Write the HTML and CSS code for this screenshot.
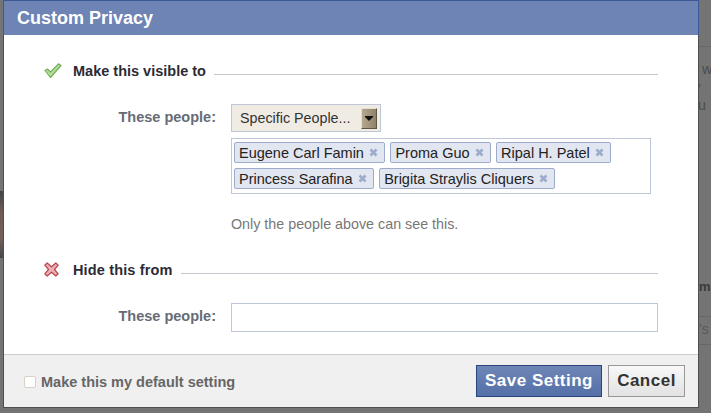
FILE: index.html
```html
<!DOCTYPE html>
<html lang="en">
<head>
<meta charset="utf-8">
<title>Custom Privacy</title>
<link rel="stylesheet" href="styles.css">
</head>
<body>
<div class="backdrop">
  <div class="bg-photo"></div>
  <div class="bg-text bg-w">w</div>
  <div class="bg-text bg-u">' u</div>
  <div class="bg-text bg-mi">mi</div>
  <div class="bg-text bg-s">'s</div>
  <div class="bg-line bg-l1"></div>
  <div class="bg-line bg-l2"></div>
  <div class="bg-line bg-l3"></div>
  <div class="dialog">
    <div class="title">Custom Privacy</div>
    <div class="body">
      <section class="section section-show">
        <div class="heading">
          <svg class="mark" width="18" height="16" viewBox="0 0 18 16"><path d="M1 7.500L3.500 6 6.500 9 14.500 .8 17 2.500 6.500 14.500z" fill="#b6dc9e" stroke="#74b05a" stroke-width="1.200" stroke-linejoin="round"/></svg>
          <h2>Make this visible to</h2>
          <span class="rule"></span>
        </div>
        <div class="row row-select">
          <label class="label">These people:</label>
          <div class="field">
            <div class="select">
              <span>Specific People...</span>
              <span class="arrow"></span>
            </div>
            <div class="tokens">
              <span class="token">Eugene Carl Famin<svg class="x" width="9" height="9" viewBox="0 0 9 9"><path d="M1.500 1.500l6 6M7.500 1.500l-6 6"/></svg></span>
              <span class="token">Proma Guo<svg class="x" width="9" height="9" viewBox="0 0 9 9"><path d="M1.500 1.500l6 6M7.500 1.500l-6 6"/></svg></span>
              <span class="token">Ripal H. Patel<svg class="x" width="9" height="9" viewBox="0 0 9 9"><path d="M1.500 1.500l6 6M7.500 1.500l-6 6"/></svg></span>
              <span class="token">Princess Sarafina<svg class="x" width="9" height="9" viewBox="0 0 9 9"><path d="M1.500 1.500l6 6M7.500 1.500l-6 6"/></svg></span>
              <span class="token">Brigita Straylis Cliquers<svg class="x" width="9" height="9" viewBox="0 0 9 9"><path d="M1.500 1.500l6 6M7.500 1.500l-6 6"/></svg></span>
            </div>
            <p class="help">Only the people above can see this.</p>
          </div>
        </div>
      </section>
      <section class="section section-hide">
        <div class="heading">
          <svg class="mark" width="18" height="16" viewBox="0 0 18 16"><path d="M.8 3.200L3.200 1 7.500 4.800 11.800 1l2.400 2.200L10.500 7.500l3.700 4.300-2.400 2.200L7.500 10.200 3.200 14 .8 11.800 4.500 7.500z" fill="#eab0b4" stroke="#bc4650" stroke-width="1.200" stroke-linejoin="round"/></svg>
          <h2>Hide this from</h2>
          <span class="rule"></span>
        </div>
        <div class="row row-input">
          <label class="label">These people:</label>
          <div class="input"></div>
        </div>
      </section>
    </div>
    <div class="footer">
      <label class="default"><span class="check"></span>Make this my default setting</label>
      <div class="buttons">
        <button class="btn btn-save">Save Setting</button>
        <button class="btn btn-cancel">Cancel</button>
      </div>
    </div>
  </div>
</div>
</body>
</html>
```
FILE: styles.css
```css
* { box-sizing: border-box; }
html, body { margin: 0; height: 100%; overflow: hidden; }
body { font-family: "Liberation Sans", Arial, sans-serif; }
.backdrop { position: relative; width: 711px; height: 413px; background: #747474; padding-left: 3px; overflow: hidden; }
.bg-photo { position: absolute; left: 0; top: 191px; width: 3px; height: 67px; background: linear-gradient(#3f4548, #6f5a55 30%, #75605a 70%, #45484c); }
.bg-text { position: absolute; font-size: 14.300px; color: #4c4c4c; line-height: 16px; }
.bg-w { left: 702px; top: 61px; }
.bg-u { left: 698px; top: 81px; }
.bg-mi { left: 699px; top: 279px; width: 12px; font-weight: bold; color: #3a3a3a; white-space: nowrap; font-size: 13px; }
.bg-s { left: 699px; top: 321px; color: #5a5a5a; }
.bg-line { position: absolute; left: 699px; width: 12px; height: 1px; background: #666; }
.bg-l1 { top: 46px; }
.bg-l2 { top: 316px; }
.bg-l3 { top: 344px; }
.dialog { position: relative; width: 696px; height: 408px; display: flex; flex-direction: column; background: #fff; border: 1px solid #4f4f4f; border-top: 0; }
.title { height: 35px; margin: 0 -1px; padding-left: 13px; background: #6d84b4; border: 1px solid #3b5998; border-bottom: 0; color: #fff; font-size: 18px; font-weight: bold; line-height: 34px; }
.body { flex: 1; padding: 26px 40px 0 40px; }
.heading { display: flex; align-items: center; height: 20px; }
.mark { flex: none; margin-right: 11px; }
.heading h2 { margin: 0; font-size: 14.500px; font-weight: bold; color: #2b2b35; line-height: 20px; white-space: nowrap; }
.section-hide .heading h2 { letter-spacing: 0.150px; }
.rule { flex: 1; height: 1px; margin: 6px 0 0 8px; background: #c4c8cf; }
.row { display: flex; }
.label { width: 187px; padding-right: 15px; text-align: right; font-size: 14.500px; font-weight: bold; color: #666b75; white-space: nowrap; }
.row-select { margin-top: 23px; }
.row-select .label { padding-top: 5px; }
.field { flex: 1; }
.select { display: flex; align-items: center; justify-content: space-between; width: 150px; height: 28px; padding: 0 3px 0 8px; background: #f0ece4; border: 1px solid #bdc7d8; font-size: 14.300px; color: #333; }
.arrow { width: 16px; height: 21px; background: linear-gradient(90deg, #b5a88f, #8f8268); border: 1px solid; border-color: #e4dfd4 #5e5545 #5e5545 #e4dfd4; position: relative; }
.arrow::before { content: ""; position: absolute; left: 3px; top: 7px; width: 8px; height: 1px; background: #111; }
.arrow::after { content: ""; position: absolute; left: 3px; top: 8px; border: 4px solid transparent; border-top: 4px solid #111; }
.tokens { display: flex; flex-wrap: wrap; align-content: flex-start; gap: 5px 5.500px; width: 420px; height: 56px; margin-top: 6px; padding: 3px 2px; background: #fff; border: 1px solid #bdc7d8; }
.token { display: flex; align-items: center; height: 21px; padding: 0 6px 0 4px; background: #e2e6f0; border: 1px solid #9daccc; border-radius: 2px; font-size: 14.500px; color: #222; white-space: nowrap; }
.x { margin-left: 5px; fill: none; stroke: #9daccc; stroke-width: 2.600; }
.help { margin: 22px 0 0; font-size: 14.300px; color: #777; line-height: 16px; }
.section-hide { margin-top: 28px; }
.row-input { margin-top: 23px; }
.row-input .label { padding-top: 5px; }
.input { width: 427px; height: 29px; background: #fff; border: 1px solid #bdc7d8; }
.footer { display: flex; align-items: center; justify-content: space-between; height: 53px; padding: 0 13px 0 20px; background: #f0f0f0; border-top: 1px solid #ccc; }
.default { display: flex; align-items: center; margin-top: 2px; font-size: 14.500px; font-weight: bold; color: #666; }
.check { width: 12px; height: 12px; margin-right: 5px; background: #fff; border: 1px solid #d8d0c4; border-radius: 2px; }
.buttons { display: flex; gap: 6px; margin-top: -1px; }
.btn { height: 32px; font-family: inherit; font-size: 17px; font-weight: bold; padding: 0; letter-spacing: 0.500px; }
.btn-save { width: 126px; color: #fff; background: linear-gradient(#6f86b6, #5470a8); border: 1px solid #29447e; }
.btn-cancel { width: 77px; color: #333; background: linear-gradient(#f8f8f8, #e2e2e2); border: 1px solid #999; }
```
